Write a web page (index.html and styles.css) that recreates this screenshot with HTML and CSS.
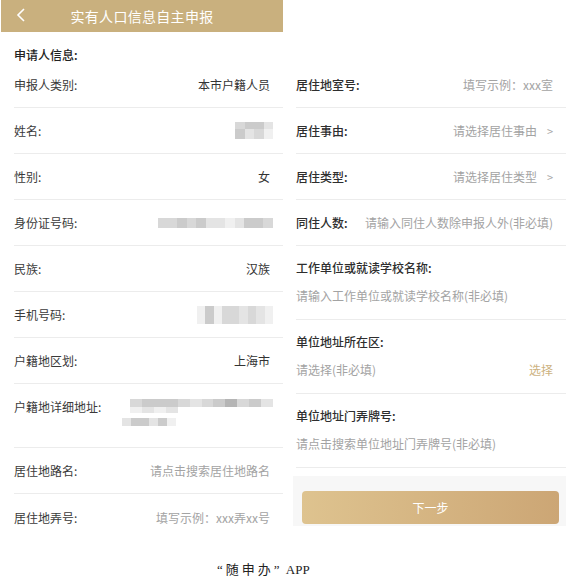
FILE: index.html
```html
<!DOCTYPE html>
<html lang="zh-CN">

<head>
  <meta charset="UTF-8">
  <meta name="viewport" content="width=device-width, initial-scale=1.0">
  <title>实有人口信息自主申报</title>
  <link rel="stylesheet" href="styles.css">
</head>

<body>
  <div class="screens">
    <!-- first screen -->
    <div class="phone phone-left">
      <header class="topbar">
        <svg class="back" width="10" height="14" viewBox="0 0 10 14">
          <polyline points="8,1 2,7 8,13" fill="none" stroke="#fff" stroke-width="1.6" />
        </svg>
        <span class="topbar-title">实有人口信息自主申报</span>
      </header>

      <div class="section-title">申请人信息:</div>

      <div class="row">
        <span class="label">申报人类别:</span>
        <span class="value">本市户籍人员</span>
      </div>
      <div class="row">
        <span class="label">姓名:</span>
        <div class="mosaic mosaic-name">
          <i class="g2"></i><i class="g3"></i><i class="g3"></i><i class="g1"></i>
          <i class="g3"></i><i class="g1"></i><i class="g2"></i><i class="g0"></i>
        </div>
      </div>
      <div class="row">
        <span class="label">性别:</span>
        <span class="value">女</span>
      </div>
      <div class="row">
        <span class="label">身份证号码:</span>
        <div class="mosaic mosaic-id">
          <i class="g2"></i><i class="g2"></i><i class="g3"></i><i class="g2"></i><i class="g3"></i><i class="g1"></i>
          <i class="g1"></i><i class="g0"></i><i class="g1"></i><i class="g3"></i><i class="g3"></i><i class="g2"></i>
        </div>
      </div>
      <div class="row">
        <span class="label">民族:</span>
        <span class="value">汉族</span>
      </div>
      <div class="row">
        <span class="label">手机号码:</span>
        <div class="mosaic mosaic-phone">
          <i class="g0"></i><i class="g3"></i><i class="g0"></i><i class="g2"></i><i class="g2"></i>
          <i class="g1"></i><i class="g2"></i><i class="g1"></i><i class="g0"></i>
        </div>
      </div>
      <div class="row">
        <span class="label">户籍地区划:</span>
        <span class="value">上海市</span>
      </div>
      <div class="row row-tall">
        <span class="label">户籍地详细地址:</span>
        <div class="address-blur">
          <div class="mosaic mosaic-addr1">
            <i class="g2"></i><i class="g3"></i><i class="g3"></i><i class="g3"></i><i class="g2"></i><i class="g1"></i>
            <i class="g2"></i><i class="g3"></i><i class="g4"></i><i class="g2"></i><i class="g3"></i><i class="g1"></i>
          </div>
          <div class="mosaic mosaic-addr2">
            <i class="g0"></i><i class="g1"></i><i class="g0"></i><i class="g1"></i>
          </div>
          <div class="mosaic mosaic-addr3">
            <i class="g1"></i><i class="g3"></i><i class="g3"></i><i class="g1"></i><i class="g3"></i><i class="g0"></i>
          </div>
        </div>
      </div>
      <div class="row">
        <span class="label">居住地路名:</span>
        <span class="value placeholder">请点击搜索居住地路名</span>
      </div>
      <div class="row row-last">
        <span class="label">居住地弄号:</span>
        <span class="value placeholder">填写示例：xxx弄xx号</span>
      </div>
    </div>

    <!-- second screen -->
    <div class="phone phone-right">
      <div class="spacer"></div>

      <div class="row">
        <span class="label strong">居住地室号:</span>
        <span class="value placeholder">填写示例：xxx室</span>
      </div>
      <div class="row">
        <span class="label strong">居住事由:</span>
        <span class="value placeholder">请选择居住事由<span class="chevron">&gt;</span></span>
      </div>
      <div class="row">
        <span class="label strong">居住类型:</span>
        <span class="value placeholder">请选择居住类型<span class="chevron">&gt;</span></span>
      </div>
      <div class="row">
        <span class="label strong">同住人数:</span>
        <span class="value placeholder">请输入同住人数除申报人外(非必填)</span>
      </div>

      <div class="block">
        <div class="label strong">工作单位或就读学校名称:</div>
        <div class="block-line placeholder">请输入工作单位或就读学校名称(非必填)</div>
      </div>
      <div class="block">
        <div class="label strong">单位地址所在区:</div>
        <div class="block-line">
          <span class="placeholder">请选择(非必填)</span>
          <span class="pick">选择</span>
        </div>
      </div>
      <div class="block">
        <div class="label strong">单位地址门弄牌号:</div>
        <div class="block-line placeholder">请点击搜索单位地址门弄牌号(非必填)</div>
      </div>

      <div class="footer-bar">
        <button class="next-btn">下一步</button>
      </div>
    </div>
  </div>

  <p class="caption"><span class="caption-cn">“随申办”</span> APP</p>
</body>

</html>
```

FILE: styles.css
```css
* {
  margin: 0;
  padding: 0;
  box-sizing: border-box;
}

body {
  width: 569px;
  background: #fff;
  font-family: 'Noto Sans CJK SC', sans-serif;
  font-size: 12px;
  color: #333;
}

.screens {
  display: flex;
  padding-left: 1px;
  gap: 10px;
}

.phone {
  display: flex;
  flex-direction: column;
}

.phone-left {
  width: 282px;
}

.phone-right {
  width: 273px;
}

/* title bar */
.topbar {
  position: relative;
  height: 32px;
  background: #c9b07e;
  display: flex;
  align-items: center;
  justify-content: center;
}

.back {
  position: absolute;
  left: 15px;
  top: 8px;
}

.topbar-title {
  color: #fff;
  font-size: 14px;
  letter-spacing: 0.3px;
}

.section-title {
  height: 30px;
  padding: 16px 0 0 13px;
  line-height: 14px;
  font-weight: 500;
  color: #222;
}

.spacer {
  height: 62px;
}

/* rows */
.row {
  height: 46px;
  margin-left: 13px;
  padding-right: 13px;
  display: flex;
  align-items: center;
  justify-content: space-between;
  border-bottom: 1px solid #ececec;
}

.phone-right .row {
  margin-left: 3px;
}

.row-tall {
  height: 64px;
  align-items: flex-start;
  padding-top: 14px;
}

.row-last {
  border-bottom: none;
}

.label {
  color: #3a3a3a;
  white-space: nowrap;
}

.label.strong {
  color: #2e2e2e;
  font-weight: 500;
}

.value {
  color: #333;
  white-space: nowrap;
}

.placeholder {
  color: #a3a3a3;
}

.chevron {
  margin-left: 10px;
  font-size: 11px;
  color: #a8a8a8;
}

/* two line blocks */
.block {
  height: 74px;
  margin-left: 3px;
  padding: 14px 13px 0 0;
  border-bottom: 1px solid #ececec;
  line-height: 16px;
}

.block-line {
  margin-top: 12px;
  display: flex;
  justify-content: space-between;
}

.pick {
  color: #cdb27f;
}

/* blurred values */
.mosaic {
  display: grid;
  margin-right: -3px;
}

.mosaic i {
  display: block;
}

.mosaic-name {
  width: 38px;
  height: 17px;
  grid-template-columns: repeat(4, 1fr);
  grid-template-rows: 7px 10px;
}

.mosaic-id {
  width: 115px;
  height: 10px;
  grid-template-columns: repeat(12, 1fr);
}

.mosaic-phone {
  width: 76px;
  height: 18px;
  grid-template-columns: repeat(9, 1fr);
}

.address-blur {
  display: flex;
  flex-direction: column;
  align-items: flex-end;
  margin-top: 1px;
}

.mosaic-addr1 {
  width: 143px;
  height: 8px;
  grid-template-columns: repeat(12, 1fr);
}

.mosaic-addr2 {
  width: 143px;
  height: 6px;
  grid-template-columns: 12px 12px 12px 12px;
  justify-content: start;
  margin-bottom: 5px;
}

.mosaic-addr3 {
  width: 151px;
  height: 8px;
  grid-template-columns: repeat(6, 9px);
  justify-content: start;
}

.g0 { background: #f0f0f0; }
.g1 { background: #e4e4e4; }
.g2 { background: #d8d8d8; }
.g3 { background: #cbcbcb; }
.g4 { background: #b5b5b5; }

/* bottom bar */
.footer-bar {
  margin-top: 8px;
  height: 50px;
  background: #f7f7f7;
  padding: 15px 7px 2px 9px;
}

.next-btn {
  width: 100%;
  height: 33px;
  border: none;
  border-radius: 4px;
  background: linear-gradient(to right, #dec38f, #cca675);
  color: #fff;
  font-family: 'Noto Sans CJK SC', sans-serif;
  font-size: 12px;
}

.caption {
  margin-top: 19px;
  padding-left: 217px;
  font-family: 'Liberation Serif', 'Noto Sans CJK SC', serif;
  font-size: 13px;
  color: #222;
}

.caption-cn {
  letter-spacing: 3px;
}
```
